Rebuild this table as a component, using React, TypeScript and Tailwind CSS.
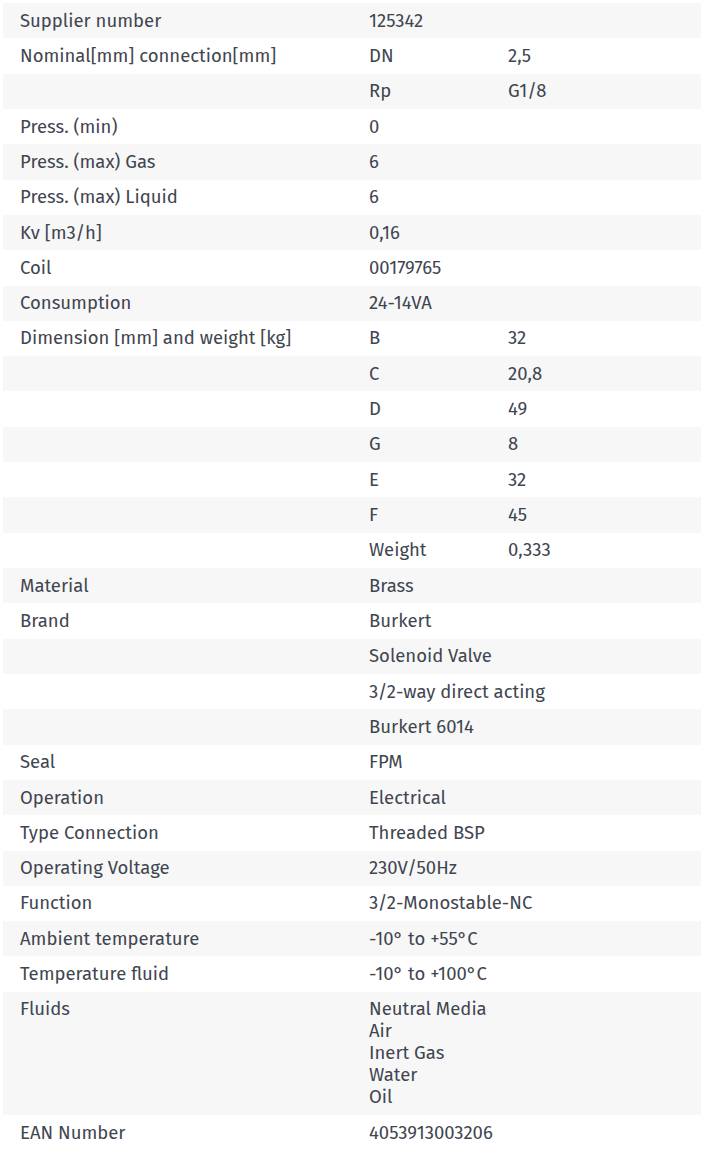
type Row = { label?: string; a: string | string[]; b?: string };

const rows: Row[] = [
  { label: "Supplier number", a: "125342" },
  { label: "Nominal[mm] connection[mm]", a: "DN", b: "2,5" },
  { a: "Rp", b: "G1/8" },
  { label: "Press. (min)", a: "0" },
  { label: "Press. (max) Gas", a: "6" },
  { label: "Press. (max) Liquid", a: "6" },
  { label: "Kv [m3/h]", a: "0,16" },
  { label: "Coil", a: "00179765" },
  { label: "Consumption", a: "24-14VA" },
  { label: "Dimension [mm] and weight [kg]", a: "B", b: "32" },
  { a: "C", b: "20,8" },
  { a: "D", b: "49" },
  { a: "G", b: "8" },
  { a: "E", b: "32" },
  { a: "F", b: "45" },
  { a: "Weight", b: "0,333" },
  { label: "Material", a: "Brass" },
  { label: "Brand", a: "Burkert" },
  { a: "Solenoid Valve" },
  { a: "3/2-way direct acting" },
  { a: "Burkert 6014" },
  { label: "Seal", a: "FPM" },
  { label: "Operation", a: "Electrical" },
  { label: "Type Connection", a: "Threaded BSP" },
  { label: "Operating Voltage", a: "230V/50Hz" },
  { label: "Function", a: "3/2-Monostable-NC" },
  { label: "Ambient temperature", a: "-10° to +55°C" },
  { label: "Temperature fluid", a: "-10° to +100°C" },
  { label: "Fluids", a: ["Neutral Media", "Air", "Inert Gas", "Water", "Oil"] },
  { label: "EAN Number", a: "4053913003206" },
];

export default function App() {
  return (
    <div className="bg-white pt-[3px] pl-[3px] text-[18.5px] leading-[22px] text-[#3f4650] font-['Fira_Sans','Open_Sans',sans-serif]">
      {rows.map((r, i) => (
        <div
          key={i}
          className={`grid grid-cols-[349px_139px_1fr] py-[6.67px] ${i % 2 === 0 ? "bg-[#f7f7f7]" : "bg-white"}`}
        >
          <div className="pl-[17px]">{r.label}</div>
          {r.b !== undefined ? (
            <>
              <div className="pl-[17px]">{r.a}</div>
              <div className="pl-[17px]">{r.b}</div>
            </>
          ) : (
            <div className="col-span-2 pl-[17px]">
              {Array.isArray(r.a) ? r.a.map((t) => <div key={t}>{t}</div>) : r.a}
            </div>
          )}
        </div>
      ))}
    </div>
  );
}
